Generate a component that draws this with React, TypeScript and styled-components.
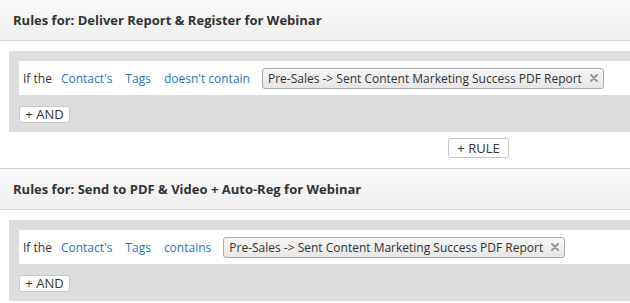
import React from 'react';
import styled, { createGlobalStyle } from 'styled-components';

const GlobalStyle = createGlobalStyle`
  html, body {
    margin: 0;
    padding: 0;
    background: #fff;
    overflow: hidden;
  }
  body {
    font-family: "Open Sans", "Liberation Sans", Arial, sans-serif;
    color: #333;
  }
`;

const Page = styled.div`
  width: 630px;
  height: 303px;
  overflow: hidden;
`;

const Section = styled.section`
  &:first-child {
    margin-top: -1px;
  }
`;

const Header = styled.div`
  height: 40px;
  display: flex;
  align-items: center;
  padding-left: 13px;
  border-top: 1px solid #d2d2d2;
  border-bottom: 1px solid #d2d2d2;
  background: linear-gradient(#f9f9f9, #efefef);
  font-size: 13px;
  font-weight: 700;
  color: #333;
`;

const Body = styled.div`
  padding: 10px 0 0 9px;
`;

const Panel = styled.div`
  background: #dddddd;
  padding: 10px 0 9px 10px;
`;

const RuleRow = styled.div`
  height: 34px;
  background: #fff;
  display: flex;
  align-items: center;
  padding-left: 4px;
  font-size: 12px;
`;

const Lead = styled.span`
  color: #333;
  margin-right: 9px;
`;

const Field = styled.a`
  color: #1b78bd;
  text-decoration: none;
  margin-right: 13px;
  cursor: pointer;
`;

const Chip = styled.span`
  display: inline-flex;
  align-items: center;
  height: 19px;
  padding: 0 5px 0 5px;
  border: 1px solid #aaa;
  border-radius: 3px;
  background: linear-gradient(#f6f6f6, #e6e6e6);
  color: #333;
  font-size: 12px;
  margin-left: -1px;
`;

const ChipClose = styled.svg`
  margin-left: 8px;
  width: 8px;
  height: 8px;
`;

const Button = styled.button<{ $w: number; $h: number }>`
  width: ${p => p.$w}px;
  height: ${p => p.$h}px;
  padding: 0;
  border: 1px solid #c8c8c8;
  border-radius: 3px;
  background: #fff;
  color: #333;
  font-family: "Open Sans", "Liberation Sans", Arial, sans-serif;
  font-size: 13px;
  line-height: 1;
  display: flex;
  align-items: center;
  justify-content: center;
`;

const AndWrap = styled.div`
  margin-top: 11px;
`;

const Footer = styled.div`
  padding: 6px 0 10px 448px;
`;

type Rule = {
  title: string;
  operator: string;
  value: string;
};

const rules: Rule[] = [
  {
    title: 'Rules for: Deliver Report & Register for Webinar',
    operator: "doesn't contain",
    value: 'Pre-Sales -> Sent Content Marketing Success PDF Report',
  },
  {
    title: 'Rules for: Send to PDF & Video + Auto-Reg for Webinar',
    operator: 'contains',
    value: 'Pre-Sales -> Sent Content Marketing Success PDF Report',
  },
];

const App: React.FC = () => {
  return (
    <Page>
      <GlobalStyle />
      {rules.map((r, i) => (
        <Section key={i}>
          <Header>{r.title}</Header>
          <Body>
            <Panel>
              <RuleRow>
                <Lead>If the</Lead>
                <Field>Contact's</Field>
                <Field>Tags</Field>
                <Field>{r.operator}</Field>
                <Chip>
                  {r.value}
                  <ChipClose viewBox="0 0 8 8">
                    <path d="M1 1 L7 7 M7 1 L1 7" stroke="#999" strokeWidth="2" strokeLinecap="round" />
                  </ChipClose>
                </Chip>
              </RuleRow>
              <AndWrap>
                <Button $w={51} $h={17}>+ AND</Button>
              </AndWrap>
            </Panel>
          </Body>
          {i === 0 && (
            <Footer>
              <Button $w={61} $h={20}>+ RULE</Button>
            </Footer>
          )}
        </Section>
      ))}
    </Page>
  );
};

export default App;
